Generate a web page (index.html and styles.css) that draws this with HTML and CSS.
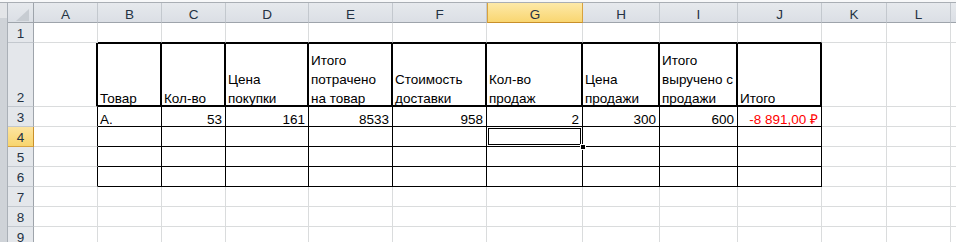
FILE: index.html
```html
<!DOCTYPE html>
<html lang="ru">
<head>
  <meta charset="UTF-8" />
  <title>Книга1 - Лист1</title>
  <link rel="stylesheet" href="styles.css">
</head>
<body>
  <div class="topbar"></div>
  <div class="sheet">
    <div class="edge"></div>
    <table class="grid">
      <colgroup>
        <col class="w-rh">
        <col class="w64"><col class="w64"><col class="w64">
        <col class="w83"><col class="w84"><col class="w94"><col class="w96">
        <col class="w77"><col class="w78"><col class="w84"><col class="w65">
        <col class="w64"><col class="w40">
      </colgroup>
      <thead>
        <tr class="hdr">
          <th class="corner"><div class="tri"></div></th>
          <th><div class="h">A</div></th>
          <th><div class="h">B</div></th>
          <th><div class="h">C</div></th>
          <th><div class="h">D</div></th>
          <th><div class="h">E</div></th>
          <th><div class="h">F</div></th>
          <th class="on"><div class="h">G</div></th>
          <th><div class="h">H</div></th>
          <th><div class="h">I</div></th>
          <th><div class="h">J</div></th>
          <th><div class="h">K</div></th>
          <th><div class="h">L</div></th>
          <th></th>
        </tr>
      </thead>
      <tbody>
        <tr class="row">
          <th><div class="n">1</div></th>
          <td></td>
          <td class="tt"></td><td class="tt"></td><td class="tt"></td><td class="tt"></td>
          <td class="tt"></td><td class="tt"></td><td class="tt"></td><td class="tt"></td><td class="tt"></td>
          <td></td><td></td><td></td>
        </tr>
        <tr class="row tall">
          <th><div class="n">2</div></th>
          <td class="lt"></td>
          <td class="hd"><div class="c">Товар</div></td>
          <td class="hd"><div class="c">Кол-во</div></td>
          <td class="hd"><div class="c">Цена покупки</div></td>
          <td class="hd"><div class="c">Итого потрачено на товар</div></td>
          <td class="hd"><div class="c">Стоимость доставки</div></td>
          <td class="hd"><div class="c">Кол-во продаж</div></td>
          <td class="hd"><div class="c">Цена продажи</div></td>
          <td class="hd"><div class="c">Итого выручено с продажи</div></td>
          <td class="hd"><div class="c">Итого</div></td>
          <td></td><td></td><td></td>
        </tr>
        <tr class="row">
          <th><div class="n">3</div></th>
          <td class="lb"></td>
          <td class="bx"><div class="c">А.</div></td>
          <td class="bx num"><div class="c">53</div></td>
          <td class="bx num"><div class="c">161</div></td>
          <td class="bx num"><div class="c">8533</div></td>
          <td class="bx num"><div class="c">958</div></td>
          <td class="bx num"><div class="c">2</div></td>
          <td class="bx num"><div class="c">300</div></td>
          <td class="bx num"><div class="c">600</div></td>
          <td class="bx num neg"><div class="c">-8 891,00 ₽</div></td>
          <td></td><td></td><td></td>
        </tr>
        <tr class="row">
          <th class="on"><div class="n">4</div></th>
          <td class="lb"></td>
          <td class="bx"></td><td class="bx"></td><td class="bx"></td><td class="bx"></td><td class="bx"></td>
          <td class="bx active"><div class="sel"><span class="handle"></span></div></td>
          <td class="bx"></td><td class="bx"></td><td class="bx"></td>
          <td></td><td></td><td></td>
        </tr>
        <tr class="row">
          <th><div class="n">5</div></th>
          <td class="lb"></td>
          <td class="bx"></td><td class="bx"></td><td class="bx"></td><td class="bx"></td><td class="bx"></td>
          <td class="bx"></td><td class="bx"></td><td class="bx"></td><td class="bx"></td>
          <td></td><td></td><td></td>
        </tr>
        <tr class="row">
          <th><div class="n">6</div></th>
          <td class="lb"></td>
          <td class="bx"></td><td class="bx"></td><td class="bx"></td><td class="bx"></td><td class="bx"></td>
          <td class="bx"></td><td class="bx"></td><td class="bx"></td><td class="bx"></td>
          <td></td><td></td><td></td>
        </tr>
        <tr class="row">
          <th><div class="n">7</div></th>
          <td></td><td></td><td></td><td></td><td></td><td></td><td></td>
          <td></td><td></td><td></td><td></td><td></td><td></td>
        </tr>
        <tr class="row">
          <th><div class="n">8</div></th>
          <td></td><td></td><td></td><td></td><td></td><td></td><td></td>
          <td></td><td></td><td></td><td></td><td></td><td></td>
        </tr>
        <tr class="row">
          <th><div class="n">9</div></th>
          <td></td><td></td><td></td><td></td><td></td><td></td><td></td>
          <td></td><td></td><td></td><td></td><td></td><td></td>
        </tr>
      </tbody>
    </table>
  </div>
</body>
</html>
```

FILE: styles.css
```css
* {
  box-sizing: border-box;
  margin: 0;
  padding: 0;
}

body {
  font-family: 'Liberation Sans', Arial, sans-serif;
  font-size: 13.5px;
  color: #000;
  background: #fff;
  width: 956px;
  height: 242px;
  overflow: hidden;
}

.topbar {
  height: 3px;
  background: #f7f8f9;
  border-bottom: 1px solid #a9aeb4;
}

.sheet {
  display: flex;
  align-items: flex-start;
}

.edge {
  flex: none;
  width: 8px;
  height: 239px;
  background: linear-gradient(#e3e5e8 0, #e3e5e8 15px, #cfd3d8 15px);
  border-right: 1px solid #aab0b7;
}

.grid {
  flex: none;
  width: 975px;
  table-layout: fixed;
  border-collapse: separate;
  border-spacing: 0;
}

.w-rh { width: 26px; }
.w40 { width: 40px; }
.w64 { width: 64px; }
.w65 { width: 65px; }
.w77 { width: 77px; }
.w78 { width: 78px; }
.w83 { width: 83px; }
.w84 { width: 84px; }
.w94 { width: 94px; }
.w96 { width: 96px; }

/* column letters */
.hdr th {
  height: 20px;
  background: linear-gradient(#e6e9ed, #dbdfe5);
  border-right: 1px solid #c3c8ce;
  border-bottom: 1px solid #9ea4ab;
  font-weight: normal;
  color: #243243;
  vertical-align: bottom;
  text-align: center;
}

.hdr th.on {
  background: linear-gradient(#fde9a8, #f9d671);
  border-right-color: #d8a23e;
  border-bottom-color: #c88f2a;
  border-left: 1px solid #d8a23e;
}

.hdr th.corner {
  border-right-color: #9ea4ab;
}

.tri {
  width: 0;
  height: 0;
  margin: 0 4px 1px auto;
  border-left: 13px solid transparent;
  border-bottom: 12px solid #c7ccd2;
}

.h {
  line-height: 19px;
  margin-bottom: -2px;
}

/* rows */
.row {
  height: 20px;
}

.row.tall {
  height: 64px;
}

.row th {
  background: #e4e7eb;
  border-right: 1px solid #9ea4ab;
  border-bottom: 1px solid #c3c8ce;
  font-weight: normal;
  color: #243243;
  text-align: center;
  vertical-align: bottom;
}

.row th.on {
  background: linear-gradient(#fde4a0, #f8d56d);
  border-right-color: #c88f2a;
  border-bottom: 1px solid #d8a23e;
}

.n {
  line-height: 19px;
  margin-bottom: -1px;
}

.row td {
  border-right: 1px solid #dadcdd;
  border-bottom: 1px solid #dadcdd;
  padding: 0 3px 0 2px;
  vertical-align: bottom;
  white-space: normal;
}

.c {
  line-height: 19px;
  margin-bottom: -3px;
}

/* borders of the table area */
.row td.tt {
  border-bottom-color: #000;
}

.row td.lt {
  border-right: 2px solid #000;
}

.row td.hd {
  border-top: 1px solid #000;
  border-right: 2px solid #000;
  border-bottom: 2px solid #000;
}

.row td.lb,
.row td.bx {
  border-right-color: #000;
}

.row td.bx {
  border-bottom-color: #000;
}

.num {
  text-align: right;
}

.neg {
  color: #ff0000;
}

/* active cell */
.active {
  position: relative;
}

.sel {
  position: absolute;
  top: -1px;
  left: -1px;
  right: -1px;
  bottom: -1px;
  border: 1px solid #000;
  box-shadow: inset 0 0 0 1px #fff, inset 0 0 0 2px #000;
}

.handle {
  position: absolute;
  right: -4px;
  bottom: -4px;
  width: 6px;
  height: 6px;
  background: #000;
  border: 1px solid #fff;
}
```
